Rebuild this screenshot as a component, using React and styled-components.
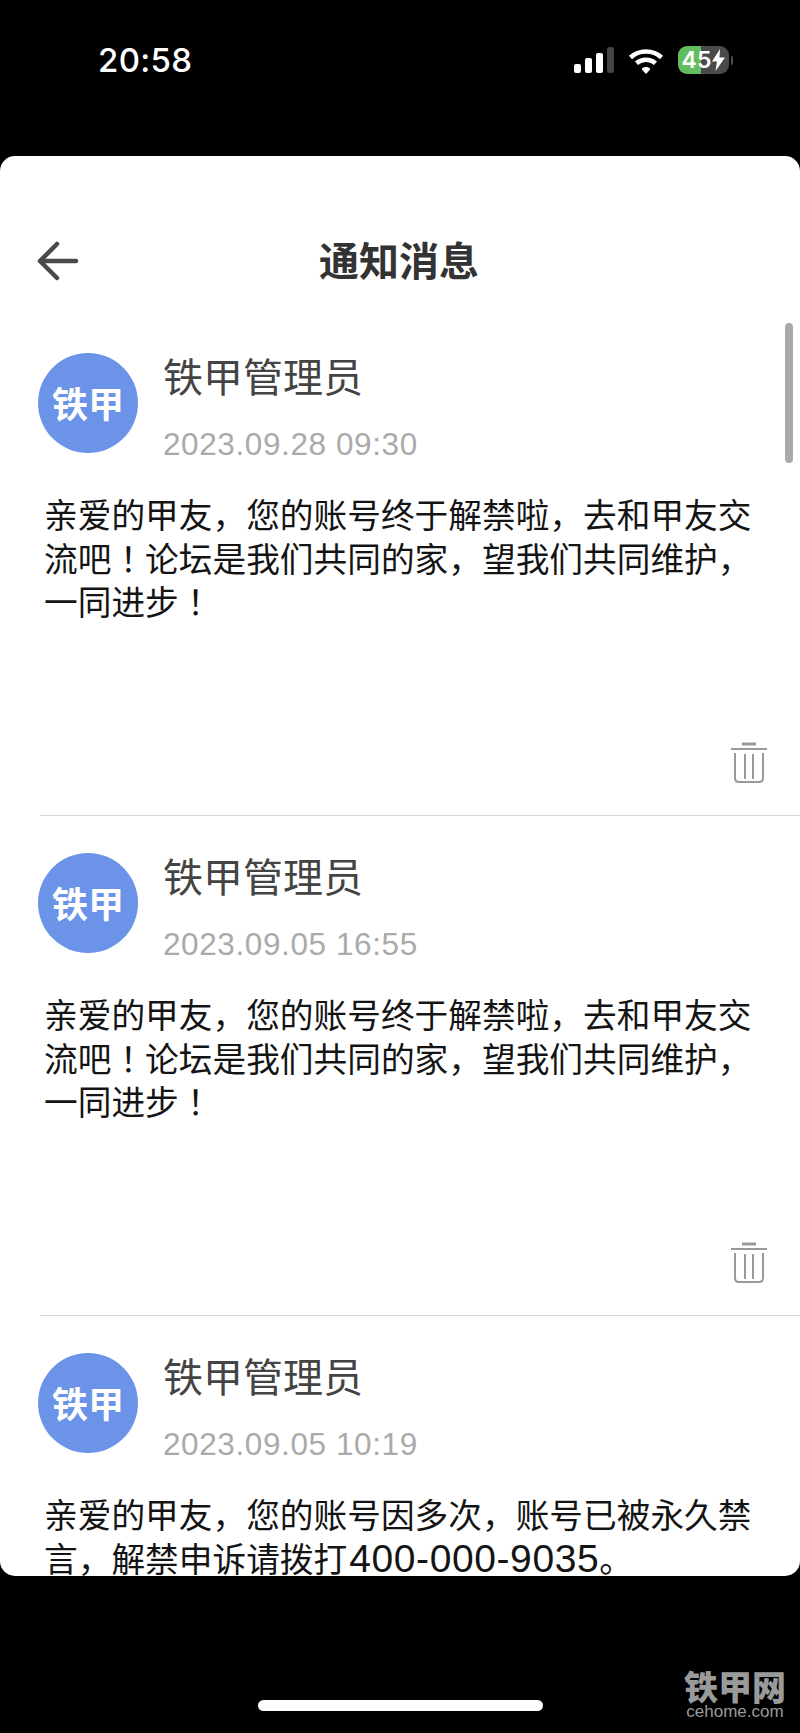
import React from 'react'
import styled, { createGlobalStyle } from 'styled-components'

const GlobalStyle = createGlobalStyle`
    html, body {
        margin: 0;
        padding: 0;
        background: #000;
    }
    body {
        font-family: "Noto Sans CJK SC", "Liberation Sans", sans-serif;
    }
`

const Screen = styled.div`
    position: relative;
    width: 800px;
    height: 1733px;
    display: flex;
    flex-direction: column;
    background: #000;
    overflow: hidden;
`

const StatusBar = styled.div`
    height: 156px;
    flex: none;
    box-sizing: border-box;
    padding: 37px 67px 0 98px;
    display: flex;
    justify-content: space-between;
    align-items: flex-start;
`

const Time = styled.span`
    font-family: Inter, "Liberation Sans", sans-serif;
    font-size: 33px;
    font-weight: 500;
    line-height: 46px;
    letter-spacing: 0.3px;
    color: #fff;
`

const StatusIcons = styled.div`
    display: flex;
    align-items: center;
    gap: 14px;
    height: 46px;
`

const Battery = styled.div`
    position: relative;
    width: 51px;
    height: 28px;
    border-radius: 9px;
    overflow: hidden;
    background: linear-gradient(90deg, #62bd5e 0 45%, #4a4a4a 45% 100%);
    display: flex;
    align-items: center;
    justify-content: center;
    gap: 1px;
    color: #fff;
    font-family: Inter, "Liberation Sans", sans-serif;
    font-size: 23px;
    font-weight: 600;
    line-height: 28px;
`

const BatteryCap = styled.span`
    width: 2px;
    height: 9px;
    margin-left: -12px;
    border-radius: 0 2px 2px 0;
    background: #4a4a4a;
`

const Card = styled.main`
    position: relative;
    height: 1420px;
    flex: none;
    background: #fff;
    border-radius: 15px;
    overflow: hidden;
`

const TopBar = styled.header`
    height: 160px;
    box-sizing: border-box;
    padding: 58px 0 0 38px;
    position: relative;
    display: flex;
    justify-content: center;
`

const BackIcon = styled.svg`
    position: absolute;
    left: 37px;
    top: 85px;
`

const PageTitle = styled.h1`
    margin: 0;
    font-size: 40px;
    line-height: 90px;
    font-weight: 700;
    color: #333;
    transform: translateX(-20px);
`

const Scrollbar = styled.div`
    position: absolute;
    right: 7px;
    top: 167px;
    width: 8px;
    height: 140px;
    border-radius: 4px;
    background: #aaa;
`

const Item = styled.article`
    height: 500px;
    box-sizing: border-box;
    margin-left: 40px;
    border-bottom: ${p => (p.$last ? 'none' : '1px solid #d8d8d8')};
    display: flex;
    flex-direction: column;
`

const ItemHead = styled.div`
    display: flex;
    gap: 25px;
    margin-left: -2px;
    padding-top: 37px;
`

const Avatar = styled.div`
    width: 100px;
    height: 100px;
    box-sizing: border-box;
    padding-bottom: 3px;
    flex: none;
    border-radius: 50%;
    background: #6b93e8;
    color: #fff;
    font-size: 36px;
    font-weight: 700;
    display: flex;
    align-items: center;
    justify-content: center;
`

const Meta = styled.div`
    display: flex;
    flex-direction: column;
`

const Sender = styled.div`
    font-size: 40px;
    line-height: 48px;
    color: #444;
    margin-top: -2px;
`

const DateText = styled.div`
    font-family: "Liberation Sans", sans-serif;
    font-size: 31.5px;
    letter-spacing: 0.6px;
    line-height: 36px;
    margin-top: 27px;
    color: #aaa;
`

const Body = styled.div`
    margin: 33px 0 0 4px;
    font-family: "Liberation Sans", "Noto Sans CJK SC", sans-serif;
    font-size: 33.7px;
    color: #141414;
`

const Line = styled.div`
    height: 43.5px;
    line-height: 43.5px;
    white-space: nowrap;
`

// the exclamation mark sits centred in its cell in the reference, so it takes the TC glyph
const Bang = styled.span`
    font-family: "Liberation Sans", "Noto Sans CJK TC", sans-serif;
`

const Digits = styled.span`
    font-size: 39px;
    line-height: 0;
    letter-spacing: 0.6px;
    margin-left: 2px;
`

const TrashRow = styled.div`
    margin-top: auto;
    padding: 0 32px 31px 0;
    display: flex;
    justify-content: flex-end;
`

const HomeIndicator = styled.div`
    width: 285px;
    height: 11px;
    flex: none;
    margin: 124px auto 0;
    border-radius: 6px;
    background: #fff;
`

const Watermark = styled.div`
    position: absolute;
    right: 14px;
    bottom: 12px;
    display: flex;
    flex-direction: column;
    align-items: center;
    color: #9a9a9a;
`

const WatermarkName = styled.span`
    font-size: 34px;
    font-weight: 900;
    line-height: 34px;
`

const WatermarkUrl = styled.span`
    font-family: "Liberation Sans", sans-serif;
    font-size: 17px;
    line-height: 18px;
`

const SignalIcon = () => (
    <svg width="40" height="26" viewBox="0 0 40 26">
        <rect x="0" y="17" width="7" height="9" rx="2" fill="#fff" />
        <rect x="11" y="11" width="7" height="15" rx="2" fill="#fff" />
        <rect x="22" y="6" width="7" height="20" rx="2" fill="#fff" />
        <rect x="33" y="0" width="7" height="26" rx="2" fill="#444" />
    </svg>
)

const WifiIcon = () => (
    <svg width="36" height="27" viewBox="0 0 36 27" fill="none" stroke="#fff" strokeWidth="4.6">
        <path d="M2.5 10.5C11 2.5 25 2.5 33.5 10.5" />
        <path d="M8.5 16.2C14 11.5 22 11.5 27.5 16.2" />
        <path d="M14 22 18 26.5 22 22C20 20 16 20 14 22Z" fill="#fff" stroke="#fff" strokeWidth="1" />
    </svg>
)

const BoltIcon = () => (
    <svg width="13" height="22" viewBox="0 0 13 22">
        <path d="M8 0 0 12.5h5L3.5 22 13 8.5H7.5Z" fill="#fff" />
    </svg>
)

const TrashIcon = () => (
    <svg width="38" height="42" viewBox="0 0 38 42" fill="none" stroke="#999" strokeWidth="2">
        <path d="M12 2h14" strokeWidth="3" />
        <path d="M1 7h36" />
        <path d="M5 11v25q0 4 4 4h20q4 0 4-4V11" />
        <path d="M15 12v25M23 12v25" />
    </svg>
)

const unbanLines = [
    '亲爱的甲友，您的账号终于解禁啦，去和甲友交',
    '流吧！论坛是我们共同的家，望我们共同维护，',
    '一同进步！',
]

const messages = [
    { date: '2023.09.28 09:30', lines: unbanLines },
    { date: '2023.09.05 16:55', lines: unbanLines },
    { date: '2023.09.05 10:19', lines: ['亲爱的甲友，您的账号因多次，账号已被永久禁', '言，解禁申诉请拨打400-000-9035。'], last: true },
]

const renderLine = line =>
    line.split(/(！|400-000-9035)/).map((part, i) => {
        if (part === '！') return <Bang key={i}>{part}</Bang>
        if (part === '400-000-9035') return <Digits key={i}>{part}</Digits>
        return part
    })

const App = () => {
    return (
        <Screen>
            <GlobalStyle />
            <StatusBar>
                <Time>20:58</Time>
                <StatusIcons>
                    <SignalIcon />
                    <WifiIcon />
                    <Battery>
                        45<BoltIcon />
                    </Battery>
                    <BatteryCap />
                </StatusIcons>
            </StatusBar>
            <Card>
                <TopBar>
                    <BackIcon width="42" height="40" viewBox="0 0 42 40" fill="none" stroke="#4a4a4a" strokeWidth="4.5" strokeLinecap="round" strokeLinejoin="round">
                        <path d="M20 3 3 20l17 17M3 20h36" />
                    </BackIcon>
                    <PageTitle>通知消息</PageTitle>
                </TopBar>
                <Scrollbar />
                {messages.map(m => (
                    <Item key={m.date} $last={m.last}>
                        <ItemHead>
                            <Avatar>铁甲</Avatar>
                            <Meta>
                                <Sender>铁甲管理员</Sender>
                                <DateText>{m.date}</DateText>
                            </Meta>
                        </ItemHead>
                        <Body>
                            {m.lines.map(line => (
                                <Line key={line}>{renderLine(line)}</Line>
                            ))}
                        </Body>
                        <TrashRow>
                            <TrashIcon />
                        </TrashRow>
                    </Item>
                ))}
            </Card>
            <HomeIndicator />
            <Watermark>
                <WatermarkName>铁甲网</WatermarkName>
                <WatermarkUrl>cehome.com</WatermarkUrl>
            </Watermark>
        </Screen>
    )
}

export default App
